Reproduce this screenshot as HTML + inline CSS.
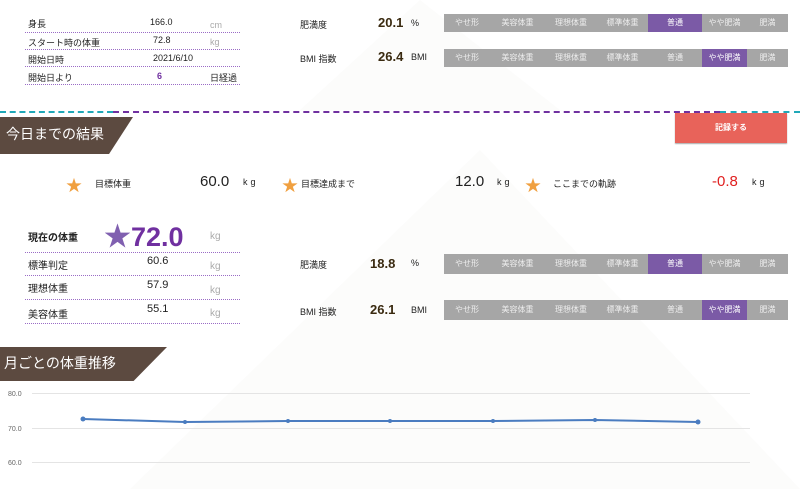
<!DOCTYPE html>
<html><head><meta charset="utf-8"><style>
*{margin:0;padding:0;box-sizing:border-box}
body{width:800px;height:489px;overflow:hidden;background:#fff;font-family:"Liberation Sans","Noto Sans CJK JP",sans-serif;color:#222;position:relative}
.a{position:absolute;white-space:nowrap}
.s{font-size:9px}
.dl{position:absolute;left:25px;width:215px;border-top:1px dotted #9a6cc6}
.bar{position:absolute;left:444px;height:18px;display:flex;background:#a6a6a6}
.bar div{color:#eee;font-size:8px;text-align:center;line-height:18px}
.bar .on{background:#7b5aa6;color:#fff}
.ban{position:absolute;left:0;background:#5c4a40;color:#fff;font-size:14px;padding-left:6px}
.st{color:#f0a040;font-size:16px}
</style></head><body>
<svg class="a" style="left:0;top:0" width="800" height="489"><polygon points="300,110 420,0 560,110" fill="#fcfcfb"/><polygon points="130,489 480,150 800,489" fill="#fcfcfb"/></svg>

<div class="a s" style="left:28px;top:17px">身長</div><div class="a s" style="left:150px;top:17px">166.0</div><div class="a s" style="left:210px;top:20px;color:#aaa">cm</div>
<div class="dl" style="top:32px"></div>
<div class="a s" style="left:28px;top:36px">スタート時の体重</div><div class="a s" style="left:153px;top:35px">72.8</div><div class="a s" style="left:210px;top:37px;color:#aaa">kg</div>
<div class="dl" style="top:49px"></div>
<div class="a s" style="left:28px;top:53px">開始日時</div><div class="a s" style="left:153px;top:53px">2021/6/10</div>
<div class="dl" style="top:66px"></div>
<div class="a s" style="left:28px;top:71px">開始日より</div><div class="a s" style="left:157px;top:71px;color:#7030a0;font-weight:bold">6</div><div class="a s" style="left:210px;top:71px">日経過</div>
<div class="dl" style="top:84px"></div>

<div class="a s" style="left:300px;top:18px">肥満度</div><div class="a" style="left:378px;top:15px;font-size:13px;font-weight:bold;color:#3a2a10">20.1</div><div class="a s" style="left:411px;top:18px">%</div>
<div class="bar" style="top:14px"><div style="width:46px">やせ形</div><div style="width:55px">美容体重</div><div style="width:52px">理想体重</div><div style="width:51px">標準体重</div><div class="on" style="width:54px">普通</div><div style="width:45px">やや肥満</div><div style="width:41px">肥満</div></div>
<div class="a s" style="left:300px;top:52px">BMI 指数</div><div class="a" style="left:378px;top:49px;font-size:13px;font-weight:bold;color:#3a2a10">26.4</div><div class="a s" style="left:411px;top:52px">BMI</div>
<div class="bar" style="top:49px"><div style="width:46px">やせ形</div><div style="width:55px">美容体重</div><div style="width:52px">理想体重</div><div style="width:51px">標準体重</div><div style="width:54px">普通</div><div class="on" style="width:45px">やや肥満</div><div style="width:41px">肥満</div></div>

<div class="a" style="left:0;top:111px;width:113px;border-top:2px dashed #20a8b8"></div>
<div class="a" style="left:113px;top:111px;width:607px;border-top:2px dashed #7030a0"></div>
<div class="a" style="left:720px;top:111px;width:80px;border-top:2px dashed #20a8b8"></div>
<div class="ban" style="top:117px;width:133px;height:37px;line-height:35px;clip-path:polygon(0 0,100% 0,82% 100%,0 100%)">今日までの結果</div>
<div class="a" style="left:675px;top:113px;width:112px;height:30px;background:#e8635a;color:#fff;font-size:8px;font-weight:bold;text-align:center;line-height:30px;box-shadow:0 1px 1px #aaa">記録する</div>

<div class="a st" style="left:66px;top:172px">★</div><div class="a s" style="left:95px;top:177px">目標体重</div><div class="a" style="left:200px;top:173px;font-size:15px">60.0</div><div class="a s" style="left:243px;top:177px;letter-spacing:3px">kg</div>
<div class="a st" style="left:282px;top:172px">★</div><div class="a s" style="left:301px;top:177px">目標達成まで</div><div class="a" style="left:455px;top:173px;font-size:15px">12.0</div><div class="a s" style="left:497px;top:177px;letter-spacing:3px">kg</div>
<div class="a st" style="left:525px;top:172px">★</div><div class="a s" style="left:553px;top:177px">ここまでの軌跡</div><div class="a" style="left:712px;top:173px;font-size:15px;color:#e02020">-0.8</div><div class="a s" style="left:752px;top:177px;letter-spacing:3px">kg</div>

<div class="a" style="left:28px;top:229px;font-size:10px;font-weight:bold">現在の体重</div>
<div class="a" style="left:104px;top:215px;font-size:27px;font-weight:bold;color:#7030a0"><span style="color:#8060b0">★</span>72.0</div>
<div class="a" style="left:210px;top:231px;font-size:10px;color:#aaa">kg</div>
<div class="dl" style="top:252px"></div>
<div class="a" style="left:28px;top:257px;font-size:10px">標準判定</div><div class="a" style="left:147px;top:255px;font-size:11px">60.6</div><div class="a" style="left:210px;top:261px;font-size:10px;color:#aaa">kg</div>
<div class="dl" style="top:275px"></div>
<div class="a" style="left:28px;top:280px;font-size:10px">理想体重</div><div class="a" style="left:147px;top:279px;font-size:11px">57.9</div><div class="a" style="left:210px;top:285px;font-size:10px;color:#aaa">kg</div>
<div class="dl" style="top:299px"></div>
<div class="a" style="left:28px;top:306px;font-size:10px">美容体重</div><div class="a" style="left:147px;top:303px;font-size:11px">55.1</div><div class="a" style="left:210px;top:308px;font-size:10px;color:#aaa">kg</div>
<div class="dl" style="top:323px"></div>

<div class="a s" style="left:300px;top:258px">肥満度</div><div class="a" style="left:370px;top:256px;font-size:13px;font-weight:bold;color:#3a2a10">18.8</div><div class="a s" style="left:411px;top:258px">%</div>
<div class="bar" style="top:254px;height:20px"><div style="width:46px;line-height:20px">やせ形</div><div style="width:55px;line-height:20px">美容体重</div><div style="width:52px;line-height:20px">理想体重</div><div style="width:51px;line-height:20px">標準体重</div><div class="on" style="width:54px;line-height:20px">普通</div><div style="width:45px;line-height:20px">やや肥満</div><div style="width:41px;line-height:20px">肥満</div></div>
<div class="a s" style="left:300px;top:305px">BMI 指数</div><div class="a" style="left:370px;top:302px;font-size:13px;font-weight:bold;color:#3a2a10">26.1</div><div class="a s" style="left:411px;top:305px">BMI</div>
<div class="bar" style="top:300px;height:20px"><div style="width:46px;line-height:20px">やせ形</div><div style="width:55px;line-height:20px">美容体重</div><div style="width:52px;line-height:20px">理想体重</div><div style="width:51px;line-height:20px">標準体重</div><div style="width:54px;line-height:20px">普通</div><div class="on" style="width:45px;line-height:20px">やや肥満</div><div style="width:41px;line-height:20px">肥満</div></div>

<div class="ban" style="top:347px;width:167px;height:34px;line-height:32px;padding-left:4px;clip-path:polygon(0 0,100% 0,80% 100%,0 100%)">月ごとの体重推移</div>

<svg class="a" style="left:0;top:380px" width="800" height="109">
<g stroke="#e4e4e4" stroke-width="1"><line x1="32" y1="13.5" x2="750" y2="13.5"/><line x1="32" y1="48.5" x2="750" y2="48.5"/><line x1="32" y1="82.5" x2="750" y2="82.5"/></g>
<g font-size="7" fill="#666" font-family="Liberation Sans"><text x="8" y="16">80.0</text><text x="8" y="51">70.0</text><text x="8" y="85">60.0</text></g>
<polyline points="83,39 185,42 288,41 390,41 493,41 595,40 698,42" fill="none" stroke="#4a7cc0" stroke-width="2"/>
<g fill="#4a7cc0"><circle cx="83" cy="39" r="2.5"/><circle cx="185" cy="42" r="2"/><circle cx="288" cy="41" r="2"/><circle cx="390" cy="41" r="2"/><circle cx="493" cy="41" r="2"/><circle cx="595" cy="40" r="2"/><circle cx="698" cy="42" r="2.5"/></g>
</svg>
</body></html>
